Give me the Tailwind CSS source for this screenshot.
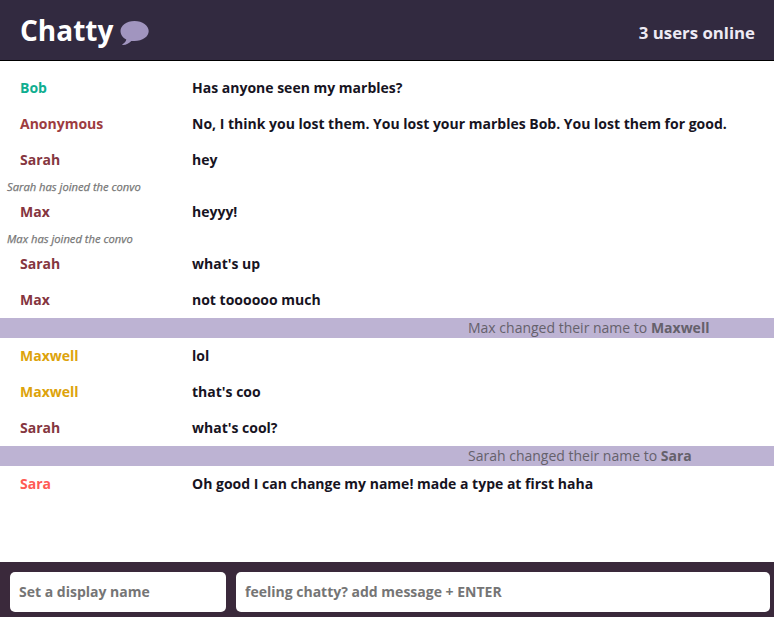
<!DOCTYPE html>
<html lang="en">
<head>
<meta charset="utf-8">
<title>Chatty</title>
<script src="https://cdn.jsdelivr.net/npm/@tailwindcss/browser@4"></script>
</head>
<body class="flex h-screen flex-col overflow-hidden bg-white font-['Open_Sans',sans-serif] text-sm leading-5 font-bold text-[#17141f]">
<header class="flex h-[61px] shrink-0 justify-between border-b border-black bg-[#322a40] pr-[19px] pl-5">
  <h1 class="flex pt-[10px] text-[28px] leading-10 text-white">Chatty
    <svg class="mt-[11px] ml-[7px] h-[24px] w-[29px]" viewBox="0 0 29 24" fill="#a195bf"><path d="M14.500 0C6.500 0 .5 4.500 .5 10.100C.5 13.700 2.800 16.900 6.300 18.600C5.900 20.700 4.300 22.200 2.600 23.200C1.900 23.600 2.200 24 3 24C6.200 23.800 9.300 22.200 11.300 19.900C12.300 20.100 13.400 20.100 14.500 20.100C22.500 20.100 28.700 15.700 28.700 10.100C28.700 4.500 22.500 0 14.500 0Z"/></svg>
  </h1>
  <p class="pt-[21px] text-[16.8px] leading-6 text-[#eeeaf4]">3 users online</p>
</header>
<main class="min-h-0 flex-1 pt-[9px]">
  <div class="flex px-5 py-2"><span class="w-[172px] text-[#0fae90]">Bob</span><span>Has anyone seen my marbles?</span></div>
  <div class="flex px-5 py-2"><span class="w-[172px] text-[#9d3c3f]">Anonymous</span><span>No, I think you lost them. You lost your marbles Bob. You lost them for good.</span></div>
  <div class="flex px-5 py-2"><span class="w-[172px] text-[#85363f]">Sarah</span><span>hey</span></div>
  <p class="h-4 pt-px pl-[7px] text-[11.2px] leading-4 font-normal text-[#777] italic [-webkit-text-stroke:0.25px_#777]">Sarah has joined the convo</p>
  <div class="flex px-5 py-2"><span class="w-[172px] text-[#85363f]">Max</span><span>heyyy!</span></div>
  <p class="h-4 pt-px pl-[7px] text-[11.2px] leading-4 font-normal text-[#777] italic [-webkit-text-stroke:0.25px_#777]">Max has joined the convo</p>
  <div class="flex px-5 py-2"><span class="w-[172px] text-[#85363f]">Sarah</span><span>what's up</span></div>
  <div class="flex px-5 py-2"><span class="w-[172px] text-[#85363f]">Max</span><span>not toooooo much</span></div>
  <p class="bg-[#bdb3d3] pl-[468px] font-normal text-[#65616b]">Max changed their name to <b>Maxwell</b></p>
  <div class="flex px-5 py-2"><span class="w-[172px] text-[#dda30b]">Maxwell</span><span>lol</span></div>
  <div class="flex px-5 py-2"><span class="w-[172px] text-[#dda30b]">Maxwell</span><span>that's coo</span></div>
  <div class="flex px-5 py-2"><span class="w-[172px] text-[#85363f]">Sarah</span><span>what's cool?</span></div>
  <p class="bg-[#bdb3d3] pl-[468px] font-normal text-[#65616b]">Sarah changed their name to <b>Sara</b></p>
  <div class="flex px-5 py-2"><span class="w-[172px] text-[#ff5a54]">Sara</span><span>Oh good I can change my name! made a type at first haha</span></div>
</main>
<footer class="flex h-[55px] shrink-0 gap-[10px] bg-[#3a293b] pt-[10px] pr-1 pl-[10px]">
  <input class="h-10 w-[216px] rounded-[5px] bg-white px-[9px] pb-[2px] placeholder:text-[#757575]" placeholder="Set a display name">
  <input class="h-10 min-w-0 flex-1 rounded-[5px] bg-white px-[9px] pb-[2px] placeholder:text-[#757575]" placeholder="feeling chatty? add message + ENTER">
</footer>
</body>
</html>
